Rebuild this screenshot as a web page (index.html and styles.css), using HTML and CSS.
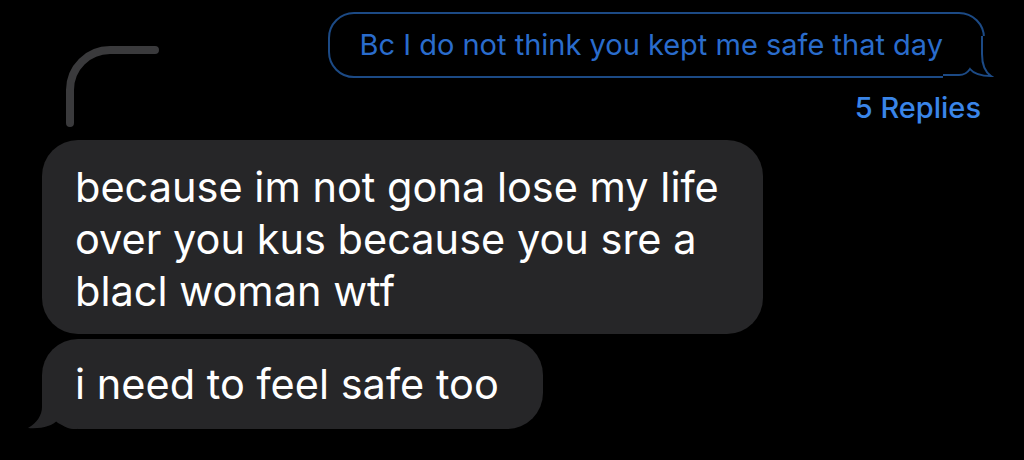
FILE: index.html
```html
<!DOCTYPE html>
<html lang="en">
<head>
    <meta charset="UTF-8">
    <meta name="viewport" content="width=device-width, initial-scale=1.0">
    <title>Thread</title>
    <link rel="stylesheet" href="styles.css">
</head>
<body>
    <div class="thread">
        <div class="top">
            <svg class="reply-line" width="100" height="88" viewBox="0 0 100 88">
                <path d="M10 77 V44 A40 40 0 0 1 50 4 H95" fill="none" stroke="#3a3a3c" stroke-width="8" stroke-linecap="round"/>
            </svg>
            <div class="outgoing">
                <div class="out-bubble">
                    Bc I do not think you kept me safe that day
                    <svg class="out-tail" width="55" height="42" viewBox="0 0 55 42">
                        <rect x="0" y="0" width="55" height="42" fill="#000"/>
                        <path d="M0 39 H16 C22 39 25 36 27 33 C31 38 38 40 48 40 C42 36 39 30 39 18 V0" fill="none" stroke="#1c4a85" stroke-width="2"/>
                    </svg>
                </div>
                <div class="replies">5 Replies</div>
            </div>
        </div>
        <div class="incoming">
            <div class="in-bubble">because im not gona lose my life<br>over you kus because you sre a<br>blacl woman wtf</div>
            <div class="in-bubble last">
                i need to feel safe too
                <svg class="in-tail" width="50" height="50" viewBox="0 0 50 50">
                    <path d="M15 0 H50 V50 H46 C40 50 35 46 31 41 C25 47 15 50 1 49 C10 44 15 36 15 28 Z" fill="#262628"/>
                </svg>
            </div>
        </div>
    </div>
</body>
</html>
```

FILE: styles.css
```css
body {
    margin: 0;
    background: #000;
    font-family: Inter, "Noto Sans", sans-serif;
}
.thread {
    width: 1024px;
    height: 460px;
    overflow: hidden;
}
.top {
    display: flex;
    justify-content: space-between;
    align-items: flex-start;
    padding-top: 12px;
}
.reply-line {
    display: block;
    margin-left: 60px;
    margin-top: 34px;
}
.outgoing {
    display: flex;
    flex-direction: column;
    align-items: flex-end;
    margin-right: 39px;
}
.out-bubble {
    position: relative;
    height: 66px;
    box-sizing: border-box;
    border: 2px solid #1c4a85;
    border-radius: 26px;
    padding: 0 40px 0 30px;
    color: #2a6ccc;
    font-size: 29px;
    line-height: 62px;
}
.out-tail {
    position: absolute;
    right: -15px;
    bottom: -2px;
}
.replies {
    margin-top: 14px;
    margin-right: 4px;
    color: #3a85e8;
    font-size: 29px;
    font-weight: 500;
    line-height: 32px;
}
.incoming {
    display: flex;
    flex-direction: column;
    align-items: flex-start;
    gap: 5px;
    margin-top: 6px;
    margin-left: 42px;
}
.in-bubble {
    position: relative;
    background: #262628;
    color: #fff;
    font-size: 41.5px;
    line-height: 52px;
    border-radius: 36px;
    padding: 21px 44px 17px 33px;
}
.in-bubble.last {
    padding-top: 19px;
    padding-bottom: 19px;
}
.in-tail {
    position: absolute;
    left: -15px;
    bottom: 0;
}
```
